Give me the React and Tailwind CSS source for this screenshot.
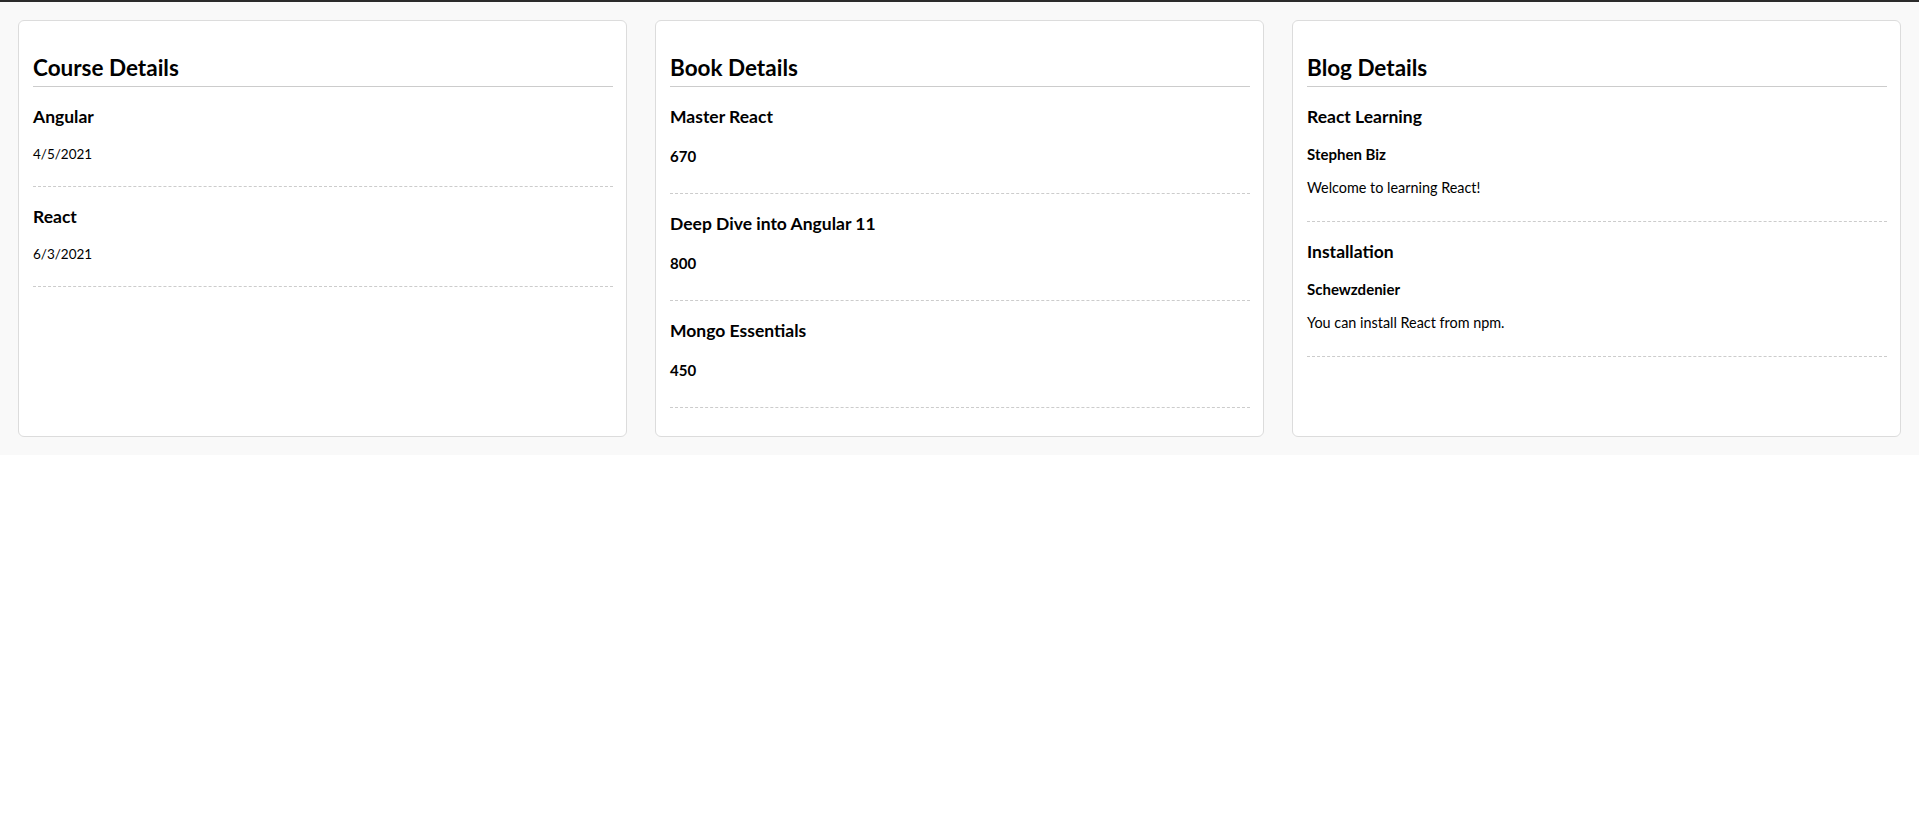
import React from "react";

const courses = [
  { name: "Angular", date: "4/5/2021" },
  { name: "React", date: "6/3/2021" },
];

const books = [
  { name: "Master React", price: 670 },
  { name: "Deep Dive into Angular 11", price: 800 },
  { name: "Mongo Essentials", price: 450 },
];

const blogs = [
  { title: "React Learning", author: "Stephen Biz", body: "Welcome to learning React!" },
  { title: "Installation", author: "Schewzdenier", body: "You can install React from npm." },
];

function Card({ title, children }) {
  return (
    <div className="flex-1 min-w-0 rounded-[6px] border border-[#dcdcdc] bg-white pt-[33px] pb-[28px] pl-[14px] pr-[13px]">
      <h2 className="border-b border-[#cccccc] pb-[4px] text-[22.5px] font-bold leading-[28px] text-black">
        {title}
      </h2>
      <div>{children}</div>
    </div>
  );
}

function ItemTitle({ children }) {
  return <h3 className="text-[17.5px] font-bold leading-[22px] text-black">{children}</h3>;
}

export default function App() {
  return (
    <div
      className="min-h-[840px] bg-white text-black"
      style={{ fontFamily: "Lato, 'Open Sans', sans-serif" }}
    >
      <div className="border-t-2 border-[#2b2b2b] bg-[#f9f9f9] p-[18px]">
        <div className="flex items-stretch gap-[28px]">
          <Card title="Course Details">
            {courses.map((c) => (
              <div key={c.name} className="border-b border-dashed border-[#cccccc] pt-[19px] pb-[23px]">
                <ItemTitle>{c.name}</ItemTitle>
                <p className="mt-[17px] text-[13.5px] leading-[18px]">{c.date}</p>
              </div>
            ))}
          </Card>
          <Card title="Book Details">
            {books.map((b) => (
              <div key={b.name} className="border-b border-dashed border-[#cccccc] pt-[19px] pb-[28px]">
                <ItemTitle>{b.name}</ItemTitle>
                <h4 className="mt-[19px] text-[15px] font-bold leading-[18px]">{b.price}</h4>
              </div>
            ))}
          </Card>
          <Card title="Blog Details">
            {blogs.map((b) => (
              <div key={b.title} className="border-b border-dashed border-[#cccccc] pt-[19px] pb-[24px]">
                <ItemTitle>{b.title}</ItemTitle>
                <h4 className="mt-[17px] text-[15px] font-bold leading-[18px]">{b.author}</h4>
                <p className="mt-[16px] text-[14.4px] leading-[18px]">{b.body}</p>
              </div>
            ))}
          </Card>
        </div>
      </div>
    </div>
  );
}
